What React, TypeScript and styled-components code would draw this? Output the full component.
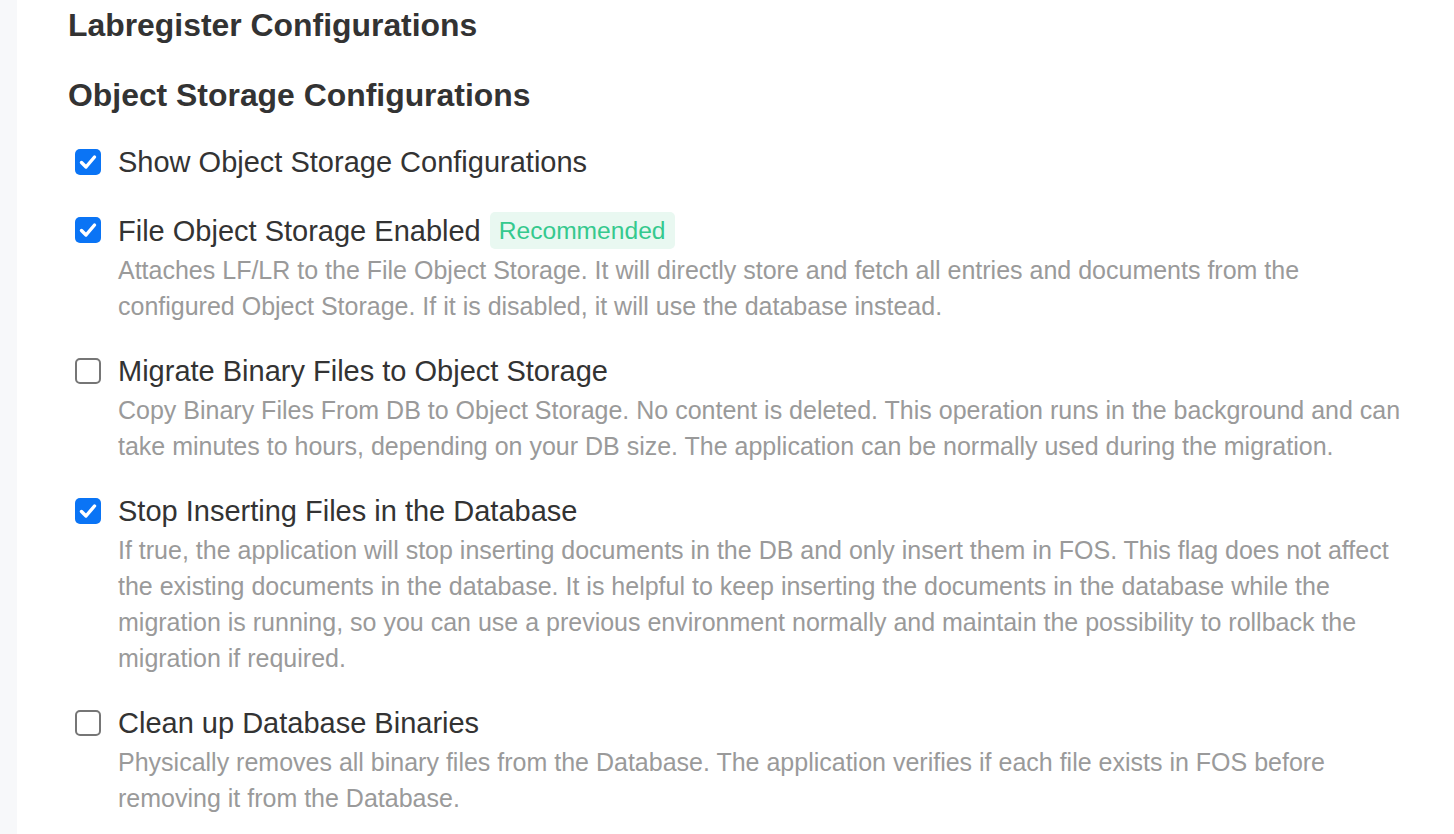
import React from 'react';
import styled, { createGlobalStyle } from 'styled-components';

const GlobalStyle = createGlobalStyle`
  html, body {
    margin: 0;
    padding: 0;
    background: #ffffff;
  }
  body {
    font-family: "Liberation Sans", Arial, Helvetica, sans-serif;
    color: #333333;
  }
`;

interface ConfigOption {
  id: string;
  label: string;
  checked: boolean;
  recommended?: boolean;
  description?: string;
}

const options: ConfigOption[] = [
  {
    id: 'show-fos',
    label: 'Show Object Storage Configurations',
    checked: true
  },
  {
    id: 'fos-enabled',
    label: 'File Object Storage Enabled',
    checked: true,
    recommended: true,
    description:
      'Attaches LF/LR to the File Object Storage. It will directly store and fetch all entries and documents from the configured Object Storage. If it is disabled, it will use the database instead.'
  },
  {
    id: 'migrate',
    label: 'Migrate Binary Files to Object Storage',
    checked: false,
    description:
      'Copy Binary Files From DB to Object Storage. No content is deleted. This operation runs in the background and can take minutes to hours, depending on your DB size. The application can be normally used during the migration.'
  },
  {
    id: 'stop-inserting',
    label: 'Stop Inserting Files in the Database',
    checked: true,
    description:
      'If true, the application will stop inserting documents in the DB and only insert them in FOS. This flag does not affect the existing documents in the database. It is helpful to keep inserting the documents in the database while the migration is running, so you can use a previous environment normally and maintain the possibility to rollback the migration if required.'
  },
  {
    id: 'cleanup',
    label: 'Clean up Database Binaries',
    checked: false,
    description:
      'Physically removes all binary files from the Database. The application verifies if each file exists in FOS before removing it from the Database.'
  }
];

const Page = styled.div`
  display: flex;
  min-height: 834px;
`;

const SideStrip = styled.div`
  width: 17px;
  flex-shrink: 0;
  background: #f7f8fa;
`;

const Main = styled.main`
  flex: 1;
  padding: 7px 44px 0 51px;
`;

const Heading = styled.h2<{ $spaceAfter: number }>`
  margin: 0 0 ${({ $spaceAfter }) => $spaceAfter}px;
  font-size: 31.9px;
  line-height: 36px;
  font-weight: 700;
  color: #333333;
`;

const OptionList = styled.div`
  display: flex;
  flex-direction: column;
  gap: 29px;
`;

const OptionRow = styled.div`
  display: flex;
  align-items: flex-start;
  gap: 17px;
  padding-left: 7px;
  min-height: 39px;
`;

const Box = styled.span<{ $checked: boolean }>`
  flex-shrink: 0;
  width: 26px;
  height: 26px;
  margin-top: 5px;
  box-sizing: border-box;
  border-radius: 5px;
  display: flex;
  align-items: center;
  justify-content: center;
  background: ${({ $checked }) => ($checked ? '#0a74f5' : '#ffffff')};
  border: ${({ $checked }) => ($checked ? 'none' : '2px solid #767676')};
`;

const OptionBody = styled.div`
  display: flex;
  flex-direction: column;
`;

const LabelLine = styled.div`
  display: flex;
  align-items: center;
  gap: 9px;
`;

const Label = styled.span`
  font-size: 29px;
  line-height: 36px;
  color: #333333;
`;

const Badge = styled.span`
  font-size: 24.6px;
  line-height: 37px;
  padding: 0 9px;
  border-radius: 5px;
  background: #e9f8f1;
  color: #35c98e;
`;

const Description = styled.p`
  margin: 3px 0 0;
  font-size: 25px;
  line-height: 36px;
  color: #9a9a9a;
`;

const Check = () => (
  <svg width="22" height="22" viewBox="0 0 22 22" fill="none">
    <path d="M4.5 11.5 L9 16 L17.5 6" stroke="#ffffff" strokeWidth="3.4" strokeLinecap="round" strokeLinejoin="round" />
  </svg>
);

const App: React.FC = () => (
  <>
    <GlobalStyle />
    <Page>
      <SideStrip />
      <Main>
        <Heading $spaceAfter={34}>Labregister Configurations</Heading>
        <Heading $spaceAfter={31}>Object Storage Configurations</Heading>
        <OptionList>
          {options.map((option) => (
            <OptionRow key={option.id}>
              <Box $checked={option.checked}>{option.checked && <Check />}</Box>
              <OptionBody>
                <LabelLine>
                  <Label>{option.label}</Label>
                  {option.recommended && <Badge>Recommended</Badge>}
                </LabelLine>
                {option.description && <Description>{option.description}</Description>}
              </OptionBody>
            </OptionRow>
          ))}
        </OptionList>
      </Main>
    </Page>
  </>
);

export default App;
